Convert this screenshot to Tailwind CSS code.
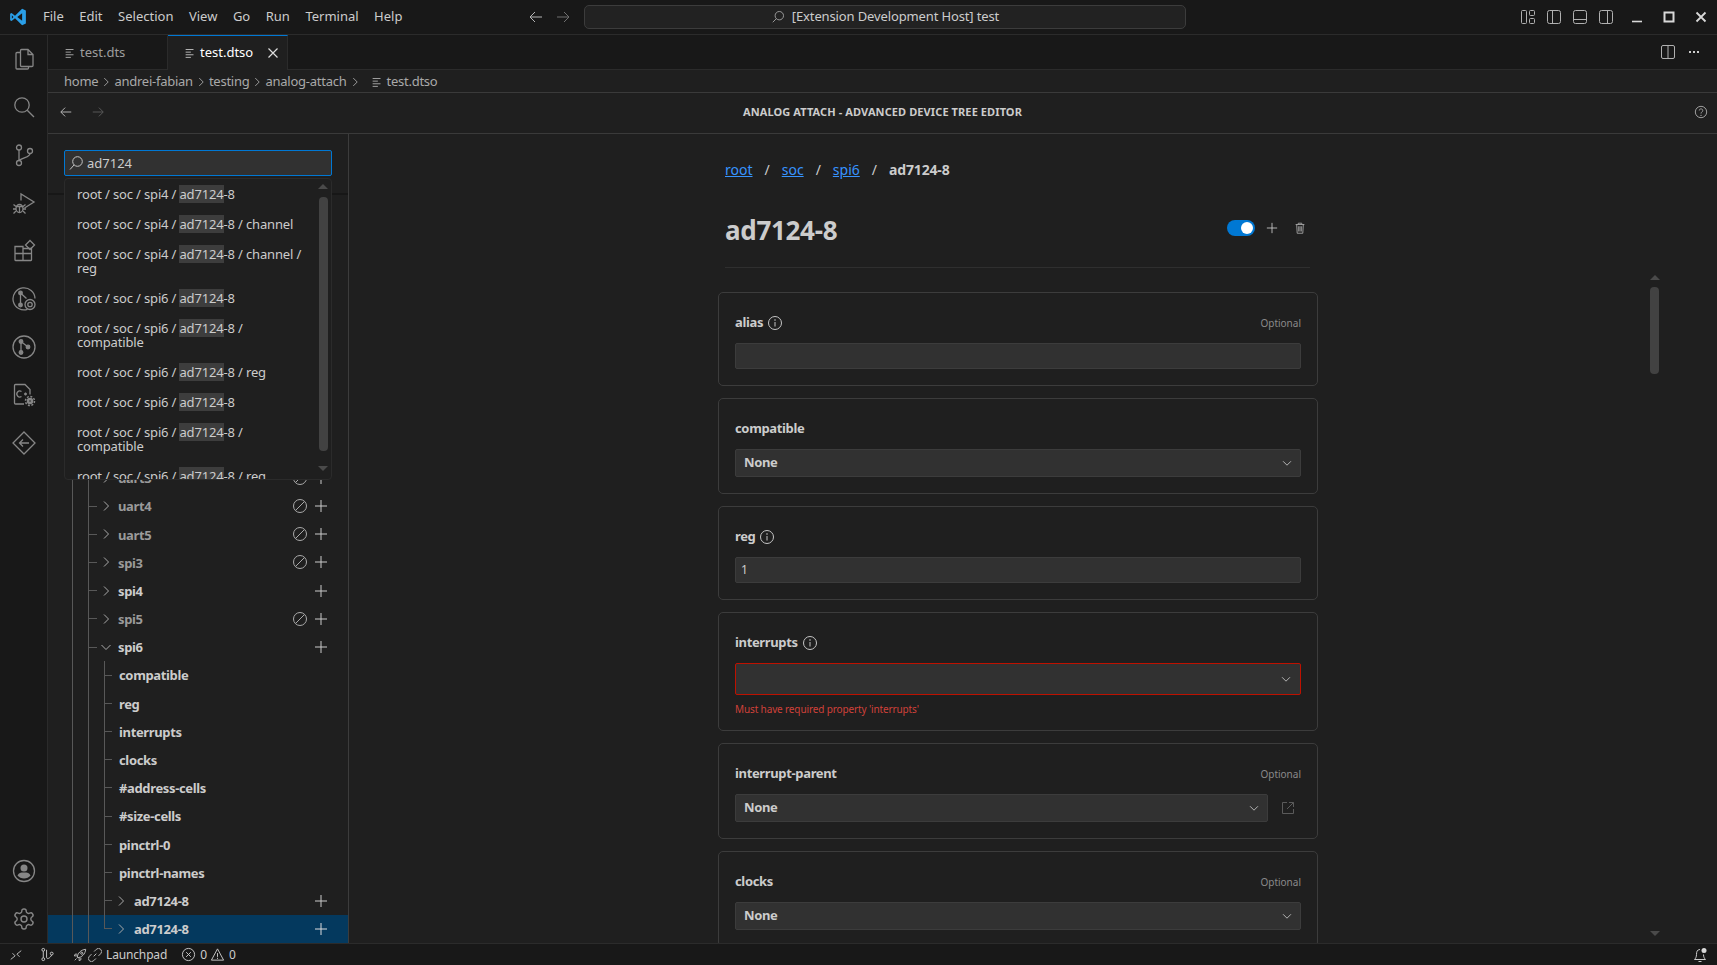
<!DOCTYPE html>
<html lang="en">
<head>
<meta charset="UTF-8">
<title>test.dtso</title>
<script src="https://cdn.jsdelivr.net/npm/@tailwindcss/browser@4"></script>
</head>
<body class="bg-[#1f1f1f]">
<!-- shared icons -->
<svg class="hidden">
  <symbol id="chev-r" viewBox="0 0 16 16"><path d="M6 3.5 10.5 8 6 12.5" fill="none" stroke="currentColor"/></symbol>
  <symbol id="chev-d" viewBox="0 0 16 16"><path d="M3.5 6 8 10.5 12.5 6" fill="none" stroke="currentColor"/></symbol>
  <symbol id="plus" viewBox="0 0 14 14"><path d="M7 1v12M1 7h12" fill="none" stroke="currentColor"/></symbol>
  <symbol id="ban" viewBox="0 0 16 16"><circle cx="8" cy="8" r="6.5" fill="none" stroke="currentColor"/><path d="M3.6 12.4 12.4 3.6" fill="none" stroke="currentColor"/></symbol>
  <symbol id="lines" viewBox="0 0 16 16"><path d="M3 4h9M3 7h6M3 10h9M3 13h6" fill="none" stroke="currentColor"/></symbol>
  <symbol id="info" viewBox="0 0 16 16"><circle cx="8" cy="8" r="6.5" fill="none" stroke="currentColor"/><path d="M8 7v4.5" fill="none" stroke="currentColor"/><circle cx="8" cy="5" r=".8" fill="currentColor"/></symbol>
  <symbol id="arrow-l" viewBox="0 0 16 16"><path d="M14 8H2.5M7 3 2 8l5 5" fill="none" stroke="currentColor"/></symbol>
  <symbol id="arrow-r" viewBox="0 0 16 16"><path d="M2 8h11.5M9 3l5 5-5 5" fill="none" stroke="currentColor"/></symbol>
  <symbol id="trash" viewBox="0 0 16 16"><path d="M3 4h10M6 4V2.5h4V4M4.2 4l.6 10h6.4l.6-10M6.5 6v6M8 6v6M9.5 6v6" fill="none" stroke="currentColor"/></symbol>
  <symbol id="split" viewBox="0 0 16 16"><rect x="1.5" y="1.5" width="13" height="13" rx="1.5" fill="none" stroke="currentColor"/><path d="M8 1.5v13" fill="none" stroke="currentColor"/></symbol>
  <symbol id="gear" viewBox="0 0 24 24"><path d="M12.22 2h-.44a2 2 0 0 0-2 2v.18a2 2 0 0 1-1 1.73l-.43.25a2 2 0 0 1-2 0l-.15-.08a2 2 0 0 0-2.73.73l-.22.38a2 2 0 0 0 .73 2.73l.15.1a2 2 0 0 1 1 1.72v.51a2 2 0 0 1-1 1.74l-.15.09a2 2 0 0 0-.73 2.73l.22.38a2 2 0 0 0 2.73.73l.15-.08a2 2 0 0 1 2 0l.43.25a2 2 0 0 1 1 1.73V20a2 2 0 0 0 2 2h.44a2 2 0 0 0 2-2v-.18a2 2 0 0 1 1-1.73l.43-.25a2 2 0 0 1 2 0l.15.08a2 2 0 0 0 2.73-.73l.22-.39a2 2 0 0 0-.73-2.73l-.15-.08a2 2 0 0 1-1-1.74v-.5a2 2 0 0 1 1-1.74l.15-.09a2 2 0 0 0 .73-2.73l-.22-.38a2 2 0 0 0-2.73-.73l-.15.08a2 2 0 0 1-2 0l-.43-.25a2 2 0 0 1-1-1.73V4a2 2 0 0 0-2-2z" fill="none" stroke="currentColor" stroke-width="1.4"/><circle cx="12" cy="12" r="3" fill="none" stroke="currentColor" stroke-width="1.4"/></symbol>
</svg>

<div class="w-[1717px] h-[965px] flex flex-col overflow-hidden text-[#cccccc] font-['Noto_Sans',sans-serif] text-[13px]">

  <!-- title bar -->
  <header class="h-[35px] shrink-0 flex items-center bg-[#181818] border-b border-[#2b2b2b] relative">
    <svg class="w-[18px] h-[18px] ml-[9px]" viewBox="0 0 24 24"><path d="M17.5 1 22.500 3.400V20.600L17.500 23 8 13.800 3.400 17.400 1.500 16.400V7.600L3.400 6.600 8 10.200Z M17.500 7 11 12l6.500 5Z M3.800 9.600v4.800L6 12Z" fill="#2a9fe8" fill-rule="evenodd"/></svg>
    <nav class="flex ml-[16px] gap-[15.5px] text-[#cccccc]">
      <span>File</span>
      <span>Edit</span>
      <span>Selection</span>
      <span>View</span>
      <span>Go</span>
      <span>Run</span>
      <span>Terminal</span>
      <span>Help</span>
    </nav>
    <svg class="size-4 absolute left-[528px] text-[#b5b5b5]"><use href="#arrow-l"/></svg>
    <svg class="size-4 absolute left-[555px] text-[#6f6f6f]"><use href="#arrow-r"/></svg>
    <div class="absolute left-[584px] top-[5px] w-[602px] h-[24px] flex items-center justify-center gap-[7px] bg-[#222222] border border-[#3c3c3c] rounded-[5px] text-[#cccccc] tracking-[-0.13px]">
      <svg class="size-[14px] text-[#a8a8a8]" viewBox="0 0 16 16"><circle cx="9.500" cy="6.500" r="4.800" fill="none" stroke="currentColor"/><path d="M6 10 2 14" fill="none" stroke="currentColor"/></svg>
      <span>[Extension Development Host] test</span>
    </div>
    <div class="ml-auto flex items-center text-[#b0b0b0]">
      <svg class="size-4" viewBox="0 0 16 16"><rect x="1.500" y="1.500" width="5" height="13" rx="1" fill="none" stroke="currentColor"/><rect x="9.500" y="1.500" width="5" height="5" rx="1" fill="none" stroke="currentColor"/><rect x="9.500" y="9.500" width="5" height="5" rx="1" fill="none" stroke="currentColor"/></svg>
      <svg class="size-4 ml-[10px]" viewBox="0 0 16 16"><rect x="1.500" y="1.500" width="13" height="13" rx="2" fill="none" stroke="currentColor"/><path d="M6.500 1.500v13" fill="none" stroke="currentColor"/></svg>
      <svg class="size-4 ml-[10px]" viewBox="0 0 16 16"><rect x="1.500" y="1.500" width="13" height="13" rx="2" fill="none" stroke="currentColor"/><path d="M1.500 10.500h13" fill="none" stroke="currentColor"/></svg>
      <svg class="size-4 ml-[10px]" viewBox="0 0 16 16"><rect x="1.500" y="1.500" width="13" height="13" rx="2" fill="none" stroke="currentColor"/><path d="M9.500 1.500v13" fill="none" stroke="currentColor"/></svg>
      <svg class="size-3 ml-[17px] text-[#d8d8d8]" viewBox="0 0 12 12"><path d="M1 10.500h10" fill="none" stroke="currentColor" stroke-width="1.600"/></svg>
      <svg class="size-3 ml-[20px] text-[#d8d8d8]" viewBox="0 0 12 12"><rect x="1.500" y="1.500" width="9" height="9" fill="none" stroke="currentColor" stroke-width="2"/></svg>
      <svg class="size-3 ml-[20px] mr-[10px] text-[#d8d8d8]" viewBox="0 0 12 12"><path d="M1.500 1.500l9 9M10.500 1.500l-9 9" fill="none" stroke="currentColor" stroke-width="1.800"/></svg>
    </div>
  </header>

  <div class="flex-1 min-h-0 flex">
    <!-- activity bar -->
    <aside class="w-[48px] shrink-0 flex flex-col bg-[#181818] border-r border-[#2b2b2b] text-[#868686]">
      <div class="h-[48px] flex items-center justify-center"><svg class="size-6" viewBox="0 0 24 24" fill="none" stroke="currentColor" stroke-width="1.3"><path d="M9.500 2.500h6.500l5 5v11a1 1 0 0 1-1 1H9.500a1 1 0 0 1-1-1v-15a1 1 0 0 1 1-1zM16 2.500v5h5M8.500 5.500H5a1 1 0 0 0-1 1V21a1 1 0 0 0 1 1h10.500a1 1 0 0 0 1-1v-1.500"/></svg></div>
      <div class="h-[48px] flex items-center justify-center"><svg class="size-6" viewBox="0 0 24 24" fill="none" stroke="currentColor" stroke-width="1.3"><circle cx="10" cy="10" r="7.200"/><path d="M15.200 15.200 22 22"/></svg></div>
      <div class="h-[48px] flex items-center justify-center"><svg class="size-6" viewBox="0 0 24 24" fill="none" stroke="currentColor" stroke-width="1.3"><circle cx="7" cy="4.500" r="2.500"/><circle cx="7" cy="20" r="2.500"/><circle cx="18" cy="8" r="2.500"/><path d="M7 7v10.500M18 10.500c0 4-7 3.500-11 7"/></svg></div>
      <div class="h-[48px] flex items-center justify-center"><svg class="size-6" viewBox="0 0 24 24" fill="none" stroke="currentColor" stroke-width="1.3"><path d="M9 9.500V3l13 8-9.500 6"/><ellipse cx="7.500" cy="17.500" rx="3.500" ry="4"/><path d="M4 15.500h7M7.500 15v7M1.500 13.500 4 15.500M13.500 13.500 11 15.500M1 18h3M11 18h3M1.500 22.500 4 20M13.500 22.500 11 20"/></svg></div>
      <div class="h-[48px] flex items-center justify-center"><svg class="size-6" viewBox="0 0 24 24" fill="none" stroke="currentColor" stroke-width="1.3"><path d="M3 7.500h8v14H3.500a.5.500 0 0 1-.5-.5zM3 14.500h16.500M11 14.500v7h8a.5.500 0 0 0 .5-.5v-11.500H11"/><path d="M18 1.500l4.500 4.500-4.500 4.500-4.500-4.500z"/></svg></div>
      <div class="h-[48px] flex items-center justify-center"><svg class="size-6" viewBox="0 0 24 24" fill="none" stroke="currentColor" stroke-width="1.3"><path d="M15.500 22.300A11 11 0 1 1 23 11.500"/><circle cx="8.500" cy="6" r="1.800" fill="currentColor"/><circle cx="8.500" cy="18" r="1.800" fill="currentColor"/><path d="M8.500 6v12M8.500 6l6 5.500"/><circle cx="18" cy="17.500" r="5"/><circle cx="18" cy="17.500" r="2.200"/></svg></div>
      <div class="h-[48px] flex items-center justify-center"><svg class="size-6" viewBox="0 0 24 24" fill="none" stroke="currentColor" stroke-width="1.3"><circle cx="12" cy="12" r="11"/><circle cx="9" cy="6.500" r="1.800" fill="currentColor"/><circle cx="9" cy="17.500" r="1.800" fill="currentColor"/><circle cx="16" cy="12" r="1.800" fill="currentColor"/><path d="M9 6.500v11M9 6.500 16 12"/></svg></div>
      <div class="h-[48px] flex items-center justify-center"><svg class="size-6" viewBox="0 0 24 24" fill="none" stroke="currentColor" stroke-width="1.3"><path d="M12 21H3.500a1 1 0 0 1-1-1V2.500a1 1 0 0 1 1-1H13l5 5v5"/><path d="M9.500 8.500a3 3 0 1 0 0 5M12 11h3M13.500 9.500v3"/><circle cx="18" cy="18" r="2" stroke-width="2.500"/><circle cx="18" cy="18" r="4.500" stroke-width="1.500" stroke-dasharray="2 1.500"/></svg></div>
      <div class="h-[48px] flex items-center justify-center"><svg class="size-6" viewBox="0 0 24 24" fill="none" stroke="currentColor" stroke-width="1.3"><path d="M12 1 23 12 12 23 1 12z"/><path d="M17 12H7.500M11 8.500 7.500 12l3.500 3.500"/></svg></div>
      <div class="mt-auto h-[48px] flex items-center justify-center"><svg class="size-6" viewBox="0 0 24 24"><circle cx="12" cy="12" r="10.500" fill="none" stroke="currentColor" stroke-width="1.300"/><circle cx="12" cy="9" r="3.500" fill="currentColor"/><path d="M5.500 16.500c1-2.500 3-3 6.500-3s5.500.5 6.500 3c-1.500 2-4 3-6.500 3s-5-1-6.500-3z" fill="currentColor"/></svg></div>
      <div class="h-[48px] flex items-center justify-center"><svg class="size-6"><use href="#gear"/></svg></div>
    </aside>

    <div class="flex-1 min-w-0 flex flex-col">
      <!-- tabs -->
      <div class="h-[35px] shrink-0 flex items-stretch bg-[#181818] border-b border-[#2b2b2b]">
        <div class="w-[120px] flex items-center pl-[15px] gap-[3px] border-t border-t-transparent border-r border-r-[#2b2b2b] text-[#9d9d9d]">
          <svg class="size-[14px] text-[#b0b0b0]"><use href="#lines"/></svg><span>test.dts</span>
        </div>
        <div class="w-[120px] -mb-px flex items-center pl-[15px] gap-[3px] bg-[#1f1f1f] border-t border-r border-t-[#0078d4] border-r-[#2b2b2b] text-white">
          <svg class="size-[14px] text-[#c8c8c8]"><use href="#lines"/></svg><span>test.dtso</span>
          <svg class="size-3 ml-auto mr-[8px] text-[#dddddd]" viewBox="0 0 12 12"><path d="M1.500 1.500l9 9M10.500 1.500l-9 9" fill="none" stroke="currentColor" stroke-width="1.200"/></svg>
        </div>
        <div class="ml-auto flex items-center text-[#b0b0b0] pr-[18px]">
          <svg class="size-4"><use href="#split"/></svg>
          <span class="ml-[13px] flex gap-[2px]"><i class="size-[2px] bg-[#cccccc]"></i><i class="size-[2px] bg-[#cccccc]"></i><i class="size-[2px] bg-[#cccccc]"></i></span>
        </div>
      </div>
      <!-- breadcrumbs -->
      <div class="h-[23px] shrink-0 flex items-center pl-[16px] pt-[2px] text-[#a9a9a9] border-b border-[#3a3a3a] tracking-[-0.25px]">
        <span>home</span><svg class="size-[14px] mx-[1px]"><use href="#chev-r"/></svg>
        <span>andrei-fabian</span><svg class="size-[14px] mx-[1px]"><use href="#chev-r"/></svg>
        <span>testing</span><svg class="size-[14px] mx-[1px]"><use href="#chev-r"/></svg>
        <span>analog-attach</span><svg class="size-[14px] mx-[1px]"><use href="#chev-r"/></svg>
        <svg class="size-[14px] ml-[7px] mr-[3px] text-[#b0b0b0]"><use href="#lines"/></svg><span>test.dtso</span>
      </div>
      <!-- webview header -->
      <div class="h-[41px] shrink-0 pb-[2px] relative flex items-center justify-center border-b border-[#3a3a3a]">
        <svg class="size-[14px] absolute left-[11px] text-[#c5c5c5]"><use href="#arrow-l"/></svg>
        <svg class="size-[14px] absolute left-[43px] text-[#5f5f5f]"><use href="#arrow-r"/></svg>
        <span class="text-[11px] font-bold text-[#cccccc] uppercase tracking-[0.1px]">Analog Attach - Advanced Device Tree Editor</span>
        <svg class="size-[14px] absolute right-[9px] text-[#b0b0b0]" viewBox="0 0 16 16"><circle cx="8" cy="8" r="6.500" fill="none" stroke="currentColor"/><path d="M6 6.300c0-2.500 4-2.500 4 0 0 1.700-2 1.700-2 3.500" fill="none" stroke="currentColor"/><circle cx="8" cy="11.800" r=".8" fill="currentColor"/></svg>
      </div>

      <div class="flex-1 min-h-0 flex">
        <!-- tree -->
        <section class="w-[301px] shrink-0 relative flex flex-col justify-end overflow-hidden border-r border-[#3c3c3c]">
          <div class="absolute bottom-0 left-0 right-0 h-[28px] bg-[#04395e]"></div>
          <div class="absolute top-[59px] left-0 right-0 h-[2px] bg-[#171717]"></div>
          <div class="relative ml-[24px] border-l border-[#585858]">
            <div class="ml-[15px] border-l border-[#585858] font-bold text-[#cccccc] tracking-[-0.35px]">
              <div class="flex items-center h-[28.2px] pr-[20px] text-[#9a9a9a]"><span class="w-2 h-px bg-[#585858]"></span><svg class="size-4 ml-px text-[#aaaaaa]"><use href="#chev-r"/></svg><span class="ml-1 pt-[2px]">uart3</span><svg class="ml-auto size-4 text-[#aaaaaa]"><use href="#ban"/></svg><svg class="ml-[6px] size-[14px] text-[#cccccc]"><use href="#plus"/></svg></div>
              <div class="flex items-center h-[28.2px] pr-[20px] text-[#9a9a9a]"><span class="w-2 h-px bg-[#585858]"></span><svg class="size-4 ml-px text-[#aaaaaa]"><use href="#chev-r"/></svg><span class="ml-1 pt-[2px]">uart4</span><svg class="ml-auto size-4 text-[#aaaaaa]"><use href="#ban"/></svg><svg class="ml-[6px] size-[14px] text-[#cccccc]"><use href="#plus"/></svg></div>
              <div class="flex items-center h-[28.2px] pr-[20px] text-[#9a9a9a]"><span class="w-2 h-px bg-[#585858]"></span><svg class="size-4 ml-px text-[#aaaaaa]"><use href="#chev-r"/></svg><span class="ml-1 pt-[2px]">uart5</span><svg class="ml-auto size-4 text-[#aaaaaa]"><use href="#ban"/></svg><svg class="ml-[6px] size-[14px] text-[#cccccc]"><use href="#plus"/></svg></div>
              <div class="flex items-center h-[28.2px] pr-[20px] text-[#9a9a9a]"><span class="w-2 h-px bg-[#585858]"></span><svg class="size-4 ml-px text-[#aaaaaa]"><use href="#chev-r"/></svg><span class="ml-1 pt-[2px]">spi3</span><svg class="ml-auto size-4 text-[#aaaaaa]"><use href="#ban"/></svg><svg class="ml-[6px] size-[14px] text-[#cccccc]"><use href="#plus"/></svg></div>
              <div class="flex items-center h-[28.2px] pr-[20px]"><span class="w-2 h-px bg-[#585858]"></span><svg class="size-4 ml-px text-[#aaaaaa]"><use href="#chev-r"/></svg><span class="ml-1 pt-[2px]">spi4</span><svg class="ml-auto size-[14px] text-[#cccccc]"><use href="#plus"/></svg></div>
              <div class="flex items-center h-[28.2px] pr-[20px] text-[#9a9a9a]"><span class="w-2 h-px bg-[#585858]"></span><svg class="size-4 ml-px text-[#aaaaaa]"><use href="#chev-r"/></svg><span class="ml-1 pt-[2px]">spi5</span><svg class="ml-auto size-4 text-[#aaaaaa]"><use href="#ban"/></svg><svg class="ml-[6px] size-[14px] text-[#cccccc]"><use href="#plus"/></svg></div>
              <div class="flex items-center h-[28.2px] pr-[20px]"><span class="w-2 h-px bg-[#585858]"></span><svg class="size-4 ml-px text-[#aaaaaa]"><use href="#chev-d"/></svg><span class="ml-1 pt-[2px]">spi6</span><svg class="ml-auto size-[14px] text-[#cccccc]"><use href="#plus"/></svg></div>
              <div class="relative ml-[15px] pl-px">
                <div class="absolute left-0 top-0 bottom-[14px] w-px bg-[#585858]"></div>
                <div class="flex items-center h-[28.2px]"><span class="w-[7px] h-px bg-[#585858]"></span><span class="ml-[7px] pt-[2px]">compatible</span></div>
                <div class="flex items-center h-[28.2px]"><span class="w-[7px] h-px bg-[#585858]"></span><span class="ml-[7px] pt-[2px]">reg</span></div>
                <div class="flex items-center h-[28.2px]"><span class="w-[7px] h-px bg-[#585858]"></span><span class="ml-[7px] pt-[2px]">interrupts</span></div>
                <div class="flex items-center h-[28.2px]"><span class="w-[7px] h-px bg-[#585858]"></span><span class="ml-[7px] pt-[2px]">clocks</span></div>
                <div class="flex items-center h-[28.2px]"><span class="w-[7px] h-px bg-[#585858]"></span><span class="ml-[7px] pt-[2px]">#address-cells</span></div>
                <div class="flex items-center h-[28.2px]"><span class="w-[7px] h-px bg-[#585858]"></span><span class="ml-[7px] pt-[2px]">#size-cells</span></div>
                <div class="flex items-center h-[28.2px]"><span class="w-[7px] h-px bg-[#585858]"></span><span class="ml-[7px] pt-[2px]">pinctrl-0</span></div>
                <div class="flex items-center h-[28.2px]"><span class="w-[7px] h-px bg-[#585858]"></span><span class="ml-[7px] pt-[2px]">pinctrl-names</span></div>
                <div class="flex items-center h-[28.2px] pr-[20px]"><span class="w-[7px] h-px bg-[#585858]"></span><svg class="size-4 ml-px text-[#aaaaaa]"><use href="#chev-r"/></svg><span class="ml-[5px] pt-[2px]">ad7124-8</span><svg class="ml-auto size-[14px] text-[#cccccc]"><use href="#plus"/></svg></div>
                <div class="flex items-center h-[28.2px] pr-[20px]"><span class="w-[7px] h-px bg-[#585858]"></span><svg class="size-4 ml-px text-[#aaaaaa]"><use href="#chev-r"/></svg><span class="ml-[5px] pt-[2px]">ad7124-8</span><svg class="ml-auto size-[14px] text-[#dddddd]"><use href="#plus"/></svg></div>
              </div>
            </div>
          </div>

          <!-- search box + results -->
          <div class="absolute left-[16px] top-[16px] w-[268px] h-[26px] flex items-center bg-[#313131] border border-[#0078d4] rounded-[2px]">
            <svg class="size-[16px] ml-[3px] text-[#c5c5c5]" viewBox="0 0 16 16"><circle cx="9.500" cy="6.500" r="4.800" fill="none" stroke="currentColor"/><path d="M6 10 2 14.500" fill="none" stroke="currentColor"/></svg>
            <span class="ml-[3px] pt-[2px] text-[#cccccc]">ad7124</span>
          </div>
          <div class="absolute left-[16px] top-[44px] w-[268px] h-[302px] overflow-hidden bg-[#1f1f1f] border border-[#2b2b2b] rounded-[4px] text-[#cccccc] leading-[14px] tracking-[-0.16px]">
            <div class="pl-[12px] py-[8px]">root / soc / spi4 / <mark class="bg-[#3d3d3d] text-[#cccccc]">ad7124</mark>-8</div>
            <div class="pl-[12px] py-[8px]">root / soc / spi4 / <mark class="bg-[#3d3d3d] text-[#cccccc]">ad7124</mark>-8 / channel</div>
            <div class="pl-[12px] py-[8px]">root / soc / spi4 / <mark class="bg-[#3d3d3d] text-[#cccccc]">ad7124</mark>-8 / channel /<br>reg</div>
            <div class="pl-[12px] py-[8px]">root / soc / spi6 / <mark class="bg-[#3d3d3d] text-[#cccccc]">ad7124</mark>-8</div>
            <div class="pl-[12px] py-[8px]">root / soc / spi6 / <mark class="bg-[#3d3d3d] text-[#cccccc]">ad7124</mark>-8 /<br>compatible</div>
            <div class="pl-[12px] py-[8px]">root / soc / spi6 / <mark class="bg-[#3d3d3d] text-[#cccccc]">ad7124</mark>-8 / reg</div>
            <div class="pl-[12px] py-[8px]">root / soc / spi6 / <mark class="bg-[#3d3d3d] text-[#cccccc]">ad7124</mark>-8</div>
            <div class="pl-[12px] py-[8px]">root / soc / spi6 / <mark class="bg-[#3d3d3d] text-[#cccccc]">ad7124</mark>-8 /<br>compatible</div>
            <div class="pl-[12px] py-[8px]">root / soc / spi6 / <mark class="bg-[#3d3d3d] text-[#cccccc]">ad7124</mark>-8 / reg</div>
            <div class="absolute right-[3px] top-[18px] w-[9px] h-[254px] rounded-[4px] bg-[#424242]"></div>
            <div class="absolute right-[3px] top-[5px] border-x-[5px] border-x-transparent border-b-[5px] border-b-[#4a4a4a]"></div>
            <div class="absolute right-[3px] bottom-[8px] border-x-[5px] border-x-transparent border-t-[5px] border-t-[#4a4a4a]"></div>
          </div>
        </section>

        <!-- node form -->
        <main class="flex-1 min-w-0 relative overflow-hidden">
          <div class="ml-[369px] w-[600px] pt-[25px]">
            <div class="ml-[7px] flex items-center h-5 gap-[12px] text-[14px]">
              <a class="text-[#3794ff] underline">root</a><span>/</span>
              <a class="text-[#3794ff] underline">soc</a><span>/</span>
              <a class="text-[#3794ff] underline">spi6</a><span>/</span>
              <span class="font-bold tracking-[-0.15px]">ad7124-8</span>
            </div>
            <div class="ml-[7px] w-[585px] mt-[33px] h-[56px] pb-[19px] flex items-center border-b border-[#2f2f2f]">
              <h1 class="text-[26px] font-bold leading-[36px] text-[#cccccc] tracking-[-0.3px]">ad7124-8</h1>
              <div class="ml-auto mb-[5px] flex items-center">
                <span class="w-[28px] h-[16px] flex items-center justify-end rounded-full bg-[#0078d4] pr-[2px]"><i class="size-3 rounded-full bg-white"></i></span>
                <svg class="size-3 ml-[11px] text-[#cccccc]"><use href="#plus"/></svg>
                <svg class="size-[14px] ml-[15px] mr-[3px] text-[#a8a8a8]"><use href="#trash"/></svg>
              </div>
            </div>

            <div class="mt-[24px] flex flex-col gap-[12px]">
              <div class="border border-[#3c3c3c] rounded-[5px] px-4 pt-[20px] pb-4">
                <div class="h-5 mb-[10px] flex items-center"><label class="font-bold tracking-[-0.35px]">alias</label><svg class="size-4 ml-[4px] text-[#c5c5c5]"><use href="#info"/></svg><span class="ml-auto text-[10px] text-[#8a8a8a]">Optional</span></div>
                <div class="h-[26px] bg-[#313131] border border-[#3c3c3c] rounded-[2px]"></div>
              </div>
              <div class="border border-[#3c3c3c] rounded-[5px] px-4 pt-[20px] pb-4">
                <div class="h-5 mb-[10px] flex items-center"><label class="font-bold tracking-[-0.35px]">compatible</label></div>
                <div class="h-[28px] pl-2 pr-[6px] flex items-center justify-between bg-[#313131] border border-[#3c3c3c] rounded-[2px] font-bold tracking-[-0.35px]">None<svg class="size-[14px] text-[#c5c5c5]"><use href="#chev-d"/></svg></div>
              </div>
              <div class="border border-[#3c3c3c] rounded-[5px] px-4 pt-[20px] pb-4">
                <div class="h-5 mb-[10px] flex items-center"><label class="font-bold tracking-[-0.35px]">reg</label><svg class="size-4 ml-[4px] text-[#c5c5c5]"><use href="#info"/></svg></div>
                <div class="h-[26px] pl-[5px] flex items-center bg-[#313131] border border-[#3c3c3c] rounded-[2px] text-[12px]">1</div>
              </div>
              <div class="border border-[#3c3c3c] rounded-[5px] px-4 pt-[20px] pb-[14px]">
                <div class="h-5 mb-[10px] flex items-center"><label class="font-bold tracking-[-0.35px]">interrupts</label><svg class="size-4 ml-[4px] text-[#c5c5c5]"><use href="#info"/></svg></div>
                <div class="h-[32px] pr-[7px] flex items-center justify-end bg-[#313131] border border-[#be1100] rounded-[2px]"><svg class="size-[14px] text-[#c5c5c5]"><use href="#chev-d"/></svg></div>
                <p class="mt-[7px] text-[10px] leading-[14px] text-[#d0413a] tracking-[-0.13px]">Must have required property 'interrupts'</p>
              </div>
              <div class="border border-[#3c3c3c] rounded-[5px] px-4 pt-[20px] pb-4">
                <div class="h-5 mb-[10px] flex items-center"><label class="font-bold tracking-[-0.35px]">interrupt-parent</label><span class="ml-auto text-[10px] text-[#8a8a8a]">Optional</span></div>
                <div class="flex items-center">
                  <div class="flex-1 h-[28px] pl-2 pr-[6px] flex items-center justify-between bg-[#313131] border border-[#3c3c3c] rounded-[2px] font-bold tracking-[-0.35px]">None<svg class="size-[14px] text-[#c5c5c5]"><use href="#chev-d"/></svg></div>
                  <svg class="size-4 ml-[12px] mr-[5px] text-[#5a5a5a]" viewBox="0 0 16 16"><path d="M7 2.500H2.500v11h11V9M9 2.500h4.500V7M13.500 2.500 7 9" fill="none" stroke="currentColor"/></svg>
                </div>
              </div>
              <div class="border border-[#3c3c3c] rounded-[5px] px-4 pt-[20px] pb-4">
                <div class="h-5 mb-[10px] flex items-center"><label class="font-bold tracking-[-0.35px]">clocks</label><span class="ml-auto text-[10px] text-[#8a8a8a]">Optional</span></div>
                <div class="h-[28px] pl-2 pr-[6px] flex items-center justify-between bg-[#313131] border border-[#3c3c3c] rounded-[2px] font-bold tracking-[-0.35px]">None<svg class="size-[14px] text-[#c5c5c5]"><use href="#chev-d"/></svg></div>
              </div>
            </div>
          </div>
          <!-- form scrollbar -->
          <div class="absolute left-[1301px] top-[153px] w-[9px] h-[87px] rounded-[4px] bg-[#424242]"></div>
          <div class="absolute left-[1301px] top-[141px] border-x-[5px] border-x-transparent border-b-[5px] border-b-[#4a4a4a]"></div>
          <div class="absolute left-[1301px] top-[797px] border-x-[5px] border-x-transparent border-t-[5px] border-t-[#4a4a4a]"></div>
        </main>
      </div>
    </div>
  </div>

  <!-- status bar -->
  <footer class="h-[22px] shrink-0 flex items-center bg-[#181818] border-t border-[#2b2b2b] text-[#cccccc] text-[12px] relative">
    <svg class="size-[14px] ml-[9px]" viewBox="0 0 16 16"><path d="M2 13l5-4-3-3M14 3 9 7l3 3" fill="none" stroke="currentColor"/></svg>
    <svg class="size-[15px] ml-[17px]" viewBox="0 0 16 16" fill="none" stroke="currentColor"><circle cx="3.500" cy="3" r="1.500"/><circle cx="3.500" cy="13" r="1.500"/><circle cx="12.500" cy="7" r="1.500"/><path d="M3.500 4.500v7M7 3v8c0 2 3 2 5.500-2.500"/></svg>
    <svg class="size-[14px] ml-[18px]" viewBox="0 0 16 16" fill="none" stroke="currentColor"><path d="M5 11C5 6 9 2 14.500 1.500 14 7 10 11 5 11zM5 7H2.500L1.500 9H5M9 11v2.500L7 14.500V11M2 14l2-2"/><circle cx="10" cy="6" r="1.200"/></svg>
    <svg class="size-[14px] ml-[1px]" viewBox="0 0 16 16" fill="none" stroke="currentColor"><path d="M6.500 9.500l3-3M7 4l2.500-2.500a2 2 0 0 1 5 5L12 9M9 12l-2.500 2.500a2 2 0 0 1-5-5L4 7"/></svg>
    <span class="ml-[4px] tracking-[-0.15px]">Launchpad</span>
    <svg class="size-[15px] ml-[14px]" viewBox="0 0 16 16" fill="none" stroke="currentColor"><circle cx="8" cy="8" r="6.500"/><path d="M5.500 5.500l5 5M10.500 5.500l-5 5"/></svg>
    <span class="ml-[4px]">0</span>
    <svg class="size-[15px] ml-[3px]" viewBox="0 0 16 16" fill="none" stroke="currentColor"><path d="M8 2 14.500 14h-13zM8 6.500v4M8 11.500v1.200"/></svg>
    <span class="ml-[4px]">0</span>
    <svg class="size-4 ml-auto mr-[9px]" viewBox="0 0 16 16" fill="none" stroke="currentColor"><path d="M8 2.500C5 2.500 4.500 5 4.500 7.500c0 2.500-1 4-2 5h11c-1-1-2-2.500-2-5M6.500 14.500h3"/><circle cx="12" cy="3.500" r="2.500" fill="#d8d8d8" stroke="none"/></svg>
  </footer>
</div>
</body>
</html>
